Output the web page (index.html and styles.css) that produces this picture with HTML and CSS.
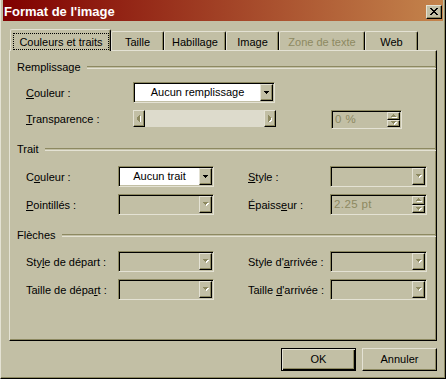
FILE: index.html
```html
<!DOCTYPE html>
<html lang="fr">
<head>
<meta charset="utf-8">
<title>Format de l'image</title>
<link rel="stylesheet" href="styles.css">
</head>
<body>
<div class="win">
  <div class="titlebar">
    <span class="title">Format de l'image</span>
    <span class="close">
      <svg width="8" height="7" viewBox="0 0 8 7" shape-rendering="crispEdges"><path fill="#000" d="M0 0h2v1H0zM6 0h2v1H6zM1 1h2v1H1zM5 1h2v1H5zM2 2h4v1H2zM3 3h2v1H3zM2 4h4v1H2zM1 5h2v1H1zM5 5h2v1H5zM0 6h2v1H0zM6 6h2v1H6z"/></svg>
    </span>
  </div>

  <div class="tabs">
    <div class="tab tab-sel"><span class="focus">Couleurs et traits</span></div>
    <div class="tab tab-taille">Taille</div>
    <div class="tab tab-habillage">Habillage</div>
    <div class="tab tab-image">Image</div>
    <div class="tab tab-zone disabled">Zone de texte</div>
    <div class="tab tab-web">Web</div>
  </div>

  <div class="panel">
    <div class="heading h-remp"><span>Remplissage</span><i class="groove"></i></div>

    <div class="row row-a">
      <span class="lab lab-wide"><u>C</u>ouleur :</span>
      <div class="combo combo-wide white">
        <span class="combo-text">Aucun remplissage</span>
        <span class="dropbtn"><svg width="5" height="3" viewBox="0 0 5 3" shape-rendering="crispEdges"><path fill="#000" d="M0 0h5v1H0zM1 1h3v1H1zM2 2h1v1H2z"/></svg></span>
      </div>
    </div>

    <div class="row row-b">
      <span class="lab lab-wide"><u>T</u>ransparence :</span>
      <div class="slider">
        <span class="sbtn"><svg width="4" height="7" viewBox="0 0 4 7" shape-rendering="crispEdges"><path fill="#fff" d="M3 1h1v7H3zM2 2h1v5H2zM1 3h1v3H1z"/><path fill="#8d8961" d="M2 0h1v7H2zM1 1h1v5H1zM0 2h1v3H0z"/></svg></span>
        <span class="track"></span>
        <span class="sbtn"><svg width="4" height="7" viewBox="0 0 4 7" shape-rendering="crispEdges"><path fill="#fff" d="M1 1h1v7H1zM2 2h1v5H2zM3 3h1v3H3z"/><path fill="#8d8961" d="M0 0h1v7H0zM1 1h1v5H1zM2 2h1v3H2z"/></svg></span>
      </div>
      <div class="spin spin-pct">
        <span class="spin-text">0 %</span>
        <span class="spin-btns">
          <span class="sb"><svg width="6" height="4" viewBox="0 0 6 4" shape-rendering="crispEdges"><path fill="#fff" d="M3 1h1v1H3zM2 2h3v1H2zM1 3h5v1H1z"/><path fill="#8d8961" d="M2 0h1v1H2zM1 1h3v1H1zM0 2h5v1H0z"/></svg></span>
          <span class="sb"><svg width="6" height="4" viewBox="0 0 6 4" shape-rendering="crispEdges"><path fill="#fff" d="M1 1h5v1H1zM2 2h3v1H2zM3 3h1v1H3z"/><path fill="#8d8961" d="M0 0h5v1H0zM1 1h3v1H1zM2 2h1v1H2z"/></svg></span>
        </span>
      </div>
    </div>

    <div class="heading h-trait"><span>Trait</span><i class="groove"></i></div>

    <div class="row row-c">
      <span class="lab lab-left">C<u>o</u>uleur :</span>
      <div class="combo combo-left white">
        <span class="combo-text">Aucun trait</span>
        <span class="dropbtn"><svg width="5" height="3" viewBox="0 0 5 3" shape-rendering="crispEdges"><path fill="#000" d="M0 0h5v1H0zM1 1h3v1H1zM2 2h1v1H2z"/></svg></span>
      </div>
      <span class="lab lab-right"><u>S</u>tyle :</span>
      <div class="combo combo-right">
        <span class="combo-text"></span>
        <span class="dropbtn"><svg width="6" height="4" viewBox="0 0 6 4" shape-rendering="crispEdges"><path fill="#fff" d="M1 1h5v1H1zM2 2h3v1H2zM3 3h1v1H3z"/><path fill="#8d8961" d="M0 0h5v1H0zM1 1h3v1H1zM2 2h1v1H2z"/></svg></span>
      </div>
    </div>

    <div class="row row-d">
      <span class="lab lab-left"><u>P</u>ointillés :</span>
      <div class="combo combo-left">
        <span class="combo-text"></span>
        <span class="dropbtn"><svg width="6" height="4" viewBox="0 0 6 4" shape-rendering="crispEdges"><path fill="#fff" d="M1 1h5v1H1zM2 2h3v1H2zM3 3h1v1H3z"/><path fill="#8d8961" d="M0 0h5v1H0zM1 1h3v1H1zM2 2h1v1H2z"/></svg></span>
      </div>
      <span class="lab lab-right">Épaiss<u>e</u>ur :</span>
      <div class="spin spin-ep">
        <span class="spin-text">2.25 pt</span>
        <span class="spin-btns">
          <span class="sb"><svg width="6" height="4" viewBox="0 0 6 4" shape-rendering="crispEdges"><path fill="#fff" d="M3 1h1v1H3zM2 2h3v1H2zM1 3h5v1H1z"/><path fill="#8d8961" d="M2 0h1v1H2zM1 1h3v1H1zM0 2h5v1H0z"/></svg></span>
          <span class="sb"><svg width="6" height="4" viewBox="0 0 6 4" shape-rendering="crispEdges"><path fill="#fff" d="M1 1h5v1H1zM2 2h3v1H2zM3 3h1v1H3z"/><path fill="#8d8961" d="M0 0h5v1H0zM1 1h3v1H1zM2 2h1v1H2z"/></svg></span>
        </span>
      </div>
    </div>

    <div class="heading h-fleches"><span>Flèches</span><i class="groove"></i></div>

    <div class="row row-e">
      <span class="lab lab-left">Sty<u>l</u>e de départ :</span>
      <div class="combo combo-left">
        <span class="combo-text"></span>
        <span class="dropbtn"><svg width="6" height="4" viewBox="0 0 6 4" shape-rendering="crispEdges"><path fill="#fff" d="M1 1h5v1H1zM2 2h3v1H2zM3 3h1v1H3z"/><path fill="#8d8961" d="M0 0h5v1H0zM1 1h3v1H1zM2 2h1v1H2z"/></svg></span>
      </div>
      <span class="lab lab-right">Style d'<u>a</u>rrivée :</span>
      <div class="combo combo-right">
        <span class="combo-text"></span>
        <span class="dropbtn"><svg width="6" height="4" viewBox="0 0 6 4" shape-rendering="crispEdges"><path fill="#fff" d="M1 1h5v1H1zM2 2h3v1H2zM3 3h1v1H3z"/><path fill="#8d8961" d="M0 0h5v1H0zM1 1h3v1H1zM2 2h1v1H2z"/></svg></span>
      </div>
    </div>

    <div class="row row-f">
      <span class="lab lab-left">Taille de dépa<u>r</u>t :</span>
      <div class="combo combo-left">
        <span class="combo-text"></span>
        <span class="dropbtn"><svg width="6" height="4" viewBox="0 0 6 4" shape-rendering="crispEdges"><path fill="#fff" d="M1 1h5v1H1zM2 2h3v1H2zM3 3h1v1H3z"/><path fill="#8d8961" d="M0 0h5v1H0zM1 1h3v1H1zM2 2h1v1H2z"/></svg></span>
      </div>
      <span class="lab lab-right">Taille <u>d</u>'arrivée :</span>
      <div class="combo combo-right">
        <span class="combo-text"></span>
        <span class="dropbtn"><svg width="6" height="4" viewBox="0 0 6 4" shape-rendering="crispEdges"><path fill="#fff" d="M1 1h5v1H1zM2 2h3v1H2zM3 3h1v1H3z"/><path fill="#8d8961" d="M0 0h5v1H0zM1 1h3v1H1zM2 2h1v1H2z"/></svg></span>
      </div>
    </div>
  </div>

  <div class="footer">
    <button class="btn btn-default">OK</button>
    <button class="btn">Annuler</button>
  </div>
</div>
</body>
</html>
```

FILE: styles.css
```css
:root {
  --face: #c2bfa5;
  --hl: #e4e2d4;
  --sh: #8d8961;
  --dk: #000000;
}

html, body {
  margin: 0;
  padding: 0;
  background: var(--face);
}

body {
  font-family: "Liberation Sans", Arial, sans-serif;
  font-size: 11px;
  color: #000;
  width: 446px;
  height: 379px;
  overflow: hidden;
}

.win {
  box-sizing: border-box;
  width: 446px;
  height: 379px;
  border-left: 1px solid var(--hl);
  border-right: 1px solid var(--dk);
  border-bottom: 1px solid var(--dk);
  box-shadow: inset -1px -1px 0 var(--sh);
  padding: 0 2px 0 2px;
  display: flex;
  flex-direction: column;
}

/* Title bar */
.titlebar {
  height: 21px;
  display: flex;
  align-items: flex-start;
  justify-content: space-between;
  background: linear-gradient(to right, #800000, #c4844c);
}

.title {
  color: #fff;
  font-weight: bold;
  font-size: 13px;
  line-height: 16px;
  padding: 4px 0 0 1px;
  white-space: nowrap;
}

.close {
  box-sizing: border-box;
  width: 16px;
  height: 14px;
  margin: 5px 1px 0 0;
  background: var(--face);
  border: 1px solid;
  border-color: var(--hl) var(--dk) var(--dk) var(--hl);
  box-shadow: inset -1px -1px 0 var(--sh);
  display: flex;
  align-items: center;
  justify-content: center;
  padding: 0 1px 1px 0;
}

.close svg { display: block; }

/* Tabs */
.tabs {
  display: flex;
  align-items: flex-end;
  height: 21px;
  margin: 8px 0 0 7px;
}

.tab {
  box-sizing: border-box;
  height: 19px;
  border-top: 1px solid var(--hl);
  border-left: 1px solid var(--hl);
  border-right: 1px solid var(--dk);
  box-shadow: inset -1px 0 0 var(--sh);
  border-radius: 2px 2px 0 0;
  padding-top: 3px;
  line-height: 14px;
  text-align: center;
  white-space: nowrap;
  background: var(--face);
}

.tab.disabled { color: var(--sh); }

.tab-sel {
  position: relative;
  z-index: 1;
  width: 101px;
  height: 22px;
  margin-bottom: -1px;
  padding-top: 0;
}

.focus {
  display: block;
  box-sizing: border-box;
  height: 17px;
  margin: 3px 1px 0 2px;
  border: 1px dotted #000;
  padding-top: 1px;
  line-height: 14px;
}

.tab-taille { width: 53px; }
.tab-habillage { width: 62px; }
.tab-image { width: 53px; }
.tab-zone { width: 86px; }
.tab-web { width: 53px; }

/* Panel */
.panel {
  box-sizing: border-box;
  width: 428px;
  height: 291px;
  margin-left: 6px;
  border-top: 1px solid var(--hl);
  border-left: 1px solid var(--hl);
  border-right: 1px solid var(--dk);
  border-bottom: 1px solid var(--dk);
  box-shadow: inset -1px -1px 0 var(--sh);
  padding: 9px 0 0 0;
  display: flex;
  flex-direction: column;
}

.heading {
  display: flex;
  height: 14px;
  line-height: 14px;
  padding-left: 7px;
  white-space: nowrap;
}

.groove {
  flex: 1;
  height: 1px;
  margin: 6px 0 0 6px;
  border-top: 1px solid var(--sh);
  border-bottom: 1px solid var(--hl);
}

.h-trait { margin-top: 13px; }
.h-fleches { margin-top: 13px; }

.row {
  display: flex;
  align-items: center;
  padding-left: 16px;
  height: 21px;
}

.row-a { margin-top: 8px; }
.row-b { margin-top: 7px; height: 19px; align-items: flex-start; }
.row-c { margin-top: 10px; }
.row-d { margin-top: 7px; }
.row-e { margin-top: 9px; }
.row-f { margin-top: 7px; }

.row-b .lab { line-height: 19px; }

.lab {
  white-space: nowrap;
  line-height: 14px;
}

.lab-wide { width: 107px; }
.lab-left { width: 92px; }
.lab-right { width: 82px; margin-left: 34px; }

u { text-decoration: underline; text-underline-offset: 1px; }

/* Combo */
.combo {
  box-sizing: border-box;
  height: 21px;
  display: flex;
  border: 1px solid;
  border-color: var(--sh) var(--hl) var(--hl) var(--sh);
  box-shadow: inset 1px 1px 0 var(--dk), inset -1px -1px 0 var(--face);
  padding: 1px;
  background: var(--face);
}

.combo.white { background: #fff; }
.combo.white { box-shadow: inset 1px 1px 0 var(--dk), inset -1px -1px 0 var(--face); }

.combo-wide { width: 142px; }
.combo-left { width: 96px; }
.combo-right { width: 97px; }

.combo-text {
  flex: 1;
  text-align: center;
  line-height: 17px;
  white-space: nowrap;
  overflow: hidden;
}

.dropbtn {
  box-sizing: border-box;
  width: 13px;
  height: 17px;
  background: var(--face);
  border: 1px solid;
  border-color: var(--hl) var(--dk) var(--dk) var(--hl);
  box-shadow: inset -1px -1px 0 var(--sh);
  display: flex;
  align-items: center;
  justify-content: center;
  padding-bottom: 1px;
}

.dropbtn svg { display: block; }

/* Slider */
.slider {
  width: 143px;
  height: 17px;
  display: flex;
}

.sbtn {
  box-sizing: border-box;
  width: 12px;
  height: 17px;
  background: var(--face);
  border: 1px solid;
  border-color: var(--hl) var(--dk) var(--dk) var(--hl);
  box-shadow: inset -1px -1px 0 var(--sh);
  display: flex;
  align-items: center;
  justify-content: center;
}

.sbtn svg { display: block; }

.track {
  flex: 1;
  background: #dddbcc;
}

/* Spinner */
.spin {
  box-sizing: border-box;
  display: flex;
  border: 1px solid;
  border-color: var(--sh) var(--hl) var(--hl) var(--sh);
  box-shadow: inset 1px 1px 0 var(--dk), inset -1px -1px 0 var(--face);
  padding: 1px;
}

.spin-pct {
  width: 71px;
  height: 19px;
  margin-left: 55px;
}

.spin-ep {
  width: 97px;
  height: 21px;
}

.spin-text {
  flex: 1;
  color: var(--sh);
  padding-left: 2px;
  line-height: 15px;
  white-space: nowrap;
  font-size: 11.5px;
  letter-spacing: 0.4px;
}

.spin-ep .spin-text { line-height: 17px; }

.spin-btns {
  width: 13px;
  display: flex;
  flex-direction: column;
}

.sb {
  flex: 1;
  box-sizing: border-box;
  background: var(--face);
  border: 1px solid;
  border-color: var(--hl) var(--dk) var(--dk) var(--hl);
  box-shadow: inset -1px -1px 0 var(--sh);
  display: flex;
  align-items: center;
  justify-content: center;
}

.sb svg { display: block; }

/* Footer buttons */
.footer {
  display: flex;
  justify-content: flex-end;
  gap: 6px;
  margin-top: 7px;
  padding-right: 6px;
}

.btn {
  box-sizing: border-box;
  width: 75px;
  height: 23px;
  margin: 0;
  padding: 0;
  font: inherit;
  color: #000;
  background: var(--face);
  border: 1px solid;
  border-color: var(--hl) var(--dk) var(--dk) var(--hl);
  box-shadow: inset -1px -1px 0 var(--sh);
  border-radius: 0;
  line-height: 21px;
}

.btn-default {
  border: 1px solid var(--dk);
  box-shadow: inset 1px 1px 0 var(--hl), inset -1px -1px 0 var(--dk), inset -2px -2px 0 var(--sh);
}
```
